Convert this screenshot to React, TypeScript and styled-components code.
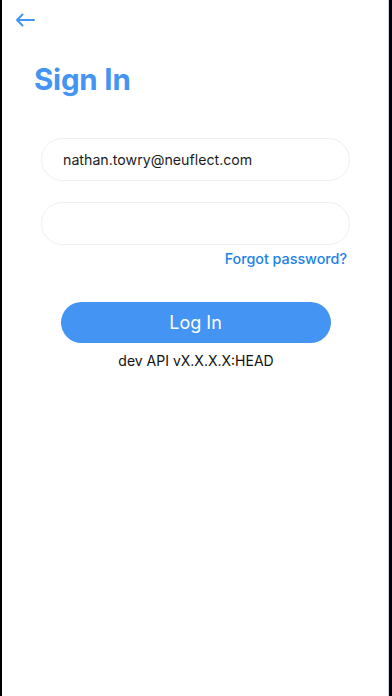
import React from "react";
import styled, { createGlobalStyle } from "styled-components";

const GlobalStyle = createGlobalStyle`
  html, body {
    margin: 0;
    padding: 0;
    background: #000;
  }
  body {
    font-family: Inter, "Noto Sans", sans-serif;
  }
`;

const Screen = styled.div`
  box-sizing: border-box;
  height: 696px;
  margin: 0 3px 0 2px;
  background: #fff;
  border-right: 1px solid #c9d1e3;
  display: flex;
  flex-direction: column;
`;

const TopBar = styled.div`
  height: 40px;
  display: flex;
  align-items: center;
  padding-left: 13px;
`;

const BackButton = styled.button`
  border: 0;
  background: none;
  padding: 0;
  width: 20px;
  height: 20px;
  display: flex;
  align-items: center;
  justify-content: center;
  color: #4394f3;
`;

const Title = styled.h1`
  margin: 19px 0 0 32px;
  font-size: 29.5px;
  line-height: 40px;
  font-weight: 700;
  color: #4394f3;
  letter-spacing: -0.2px;
`;

const Form = styled.div`
  display: flex;
  flex-direction: column;
  padding: 0 38px 0 39px;
  margin-top: 39px;
  gap: 21px;
`;

const Field = styled.div`
  box-sizing: border-box;
  height: 43px;
  border: 1px solid #efefef;
  border-radius: 22px;
  display: flex;
  align-items: center;
  padding-left: 21px;
  font-size: 14.2px;
  color: #1c1c1e;
`;

const ForgotLink = styled.a`
  align-self: flex-end;
  margin-top: -19px;
  margin-right: 3px;
  font-size: 14.3px;
  font-weight: 500;
  color: #1b82e6;
  line-height: 24px;
`;

const Actions = styled.div`
  display: flex;
  flex-direction: column;
  align-items: center;
  margin-top: 31px;
`;

const LoginButton = styled.button`
  width: 270px;
  height: 41px;
  border: 0;
  border-radius: 21px;
  background: #4394f3;
  color: #fff;
  font-family: inherit;
  font-size: 18px;
  margin-left: 1px;
`;

const Version = styled.div`
  margin-top: 9px;
  font-size: 14px;
  color: #111;
  margin-left: 2px;
`;

const ArrowLeft = () => (
  <svg width="20" height="14" viewBox="0 0 20 14" fill="none">
    <path
      d="M19 7H2M7.5 1.5L2 7l5.5 5.5"
      stroke="currentColor"
      strokeWidth="2"
      strokeLinecap="round"
      strokeLinejoin="round"
    />
  </svg>
);

export default function App() {
  return (
    <>
      <GlobalStyle />
      <Screen>
        <TopBar>
          <BackButton aria-label="Back">
            <ArrowLeft />
          </BackButton>
        </TopBar>
        <Title>Sign In</Title>
        <Form>
          <Field>nathan.towry@neuflect.com</Field>
          <Field />
          <ForgotLink>Forgot password?</ForgotLink>
        </Form>
        <Actions>
          <LoginButton>Log In</LoginButton>
          <Version>dev API vX.X.X.X:HEAD</Version>
        </Actions>
      </Screen>
    </>
  );
}
